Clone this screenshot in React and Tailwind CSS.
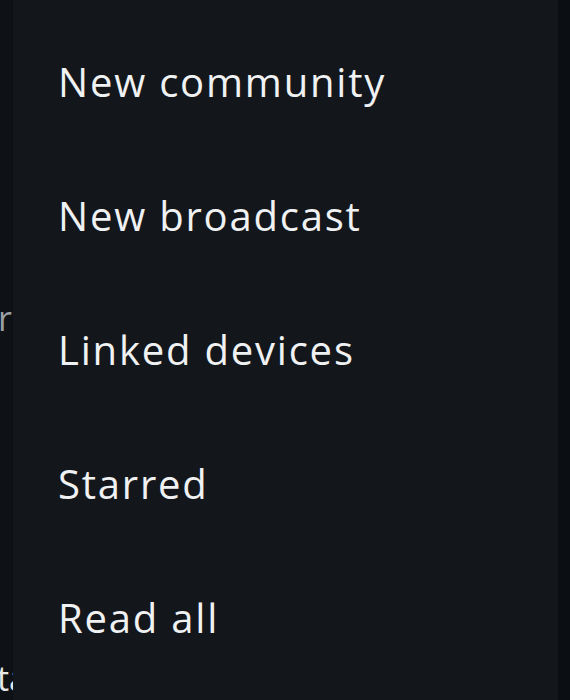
export default function App() {
  const items = ["New community", "New broadcast", "Linked devices", "Starred", "Read all"];
  return (
    <div className="flex h-[700px] w-[570px] overflow-hidden bg-[#0e1115]" style={{ fontFamily: '"Open Sans", "Noto Sans", sans-serif' }}>
      <div className="relative w-[13px] shrink-0 overflow-hidden bg-[#0e1115]">
        <div className="absolute right-[1px] top-[301px] whitespace-nowrap text-[34px] leading-none text-[#9b9fa4]">Archiver</div>
        <div className="absolute left-[-3px] top-[661px] whitespace-nowrap text-[34px] leading-none text-[#e8e8e8]">ta</div>
      </div>
      <div className="flex flex-1 flex-col bg-[#13171c] pt-[15px] pl-[45px]">
        {items.map((t) => (
          <div key={t} className="flex h-[134px] items-center text-[40px] leading-none tracking-[1.8px] text-[#f0f1f2]">
            {t}
          </div>
        ))}
      </div>
      <div className="w-[12px] shrink-0 bg-[#0b0e12]" />
    </div>
  );
}
